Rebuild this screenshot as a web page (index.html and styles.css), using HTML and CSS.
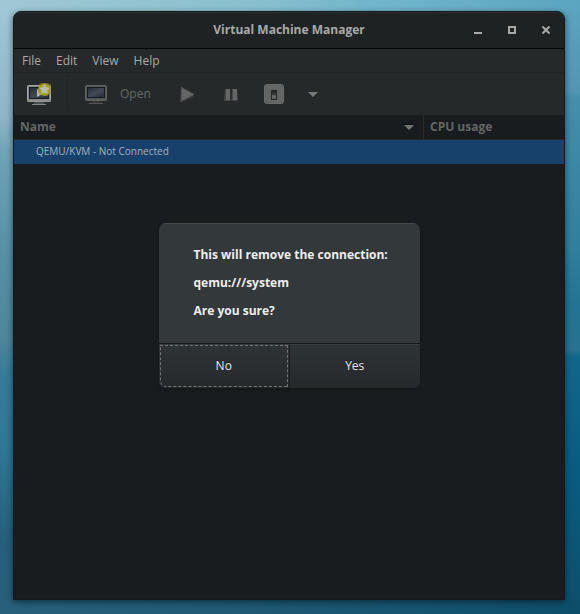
FILE: index.html
```html
<!DOCTYPE html>
<html lang="en">
<head>
<meta charset="utf-8">
<title>Virtual Machine Manager</title>
<link rel="stylesheet" href="styles.css">
</head>
<body>
<main class="window">
  <header class="titlebar">
    <h1 class="title">Virtual Machine Manager</h1>
    <div class="window-controls">
      <button type="button" aria-label="Minimize"><svg width="8" height="8" viewBox="0 0 8 8"><path d="M0 6h8v2H0z" fill="currentColor"/></svg></button>
      <button type="button" aria-label="Maximize"><svg width="8" height="8" viewBox="0 0 8 8"><path d="M1 1h6v6H1z" fill="none" stroke="currentColor" stroke-width="2"/></svg></button>
      <button type="button" aria-label="Close"><svg width="8" height="8" viewBox="0 0 8 8"><path d="M.5.5l7 7M7.500.5l-7 7" fill="none" stroke="currentColor" stroke-width="2"/></svg></button>
    </div>
  </header>
  <nav class="menubar">
    <button type="button">File</button>
    <button type="button">Edit</button>
    <button type="button">View</button>
    <button type="button">Help</button>
  </nav>
  <div class="toolbar">
    <button type="button" class="tool tool-new" aria-label="Create a new virtual machine">
      <svg width="26" height="24" viewBox="0 0 26 24">
        <defs>
          <linearGradient id="screen" x1="0" y1="0" x2="1" y2="1"><stop offset="0" stop-color="#222c38"/><stop offset=".5" stop-color="#414a56"/><stop offset="1" stop-color="#252e39"/></linearGradient>
          <radialGradient id="glow"><stop offset=".6" stop-color="#aaa526"/><stop offset=".9" stop-color="#999619"/><stop offset="1" stop-color="#999619" stop-opacity=".4"/></radialGradient>
        </defs>
        <rect x="1.500" y="3.500" width="23" height="16" rx="1" fill="#878987" stroke="#a5a6a4"/>
        <rect x="3.500" y="5.500" width="19" height="11" fill="url(#screen)" stroke="#161c23"/>
        <path d="M1 18.500h24" stroke="#8b8c8a" stroke-width="2"/>
        <path d="M9 20h8l2 2H7z" fill="#4b4d4c"/><path d="M6 22.500h14" stroke="#858684"/>
        <path d="M11 7v8l7-4z" fill="#b5b7b3"/>
        <path d="M14 1h9l2 1v9l-3 3h-6l-4-3V4z" fill="url(#glow)"/>
        <path d="M18.500 2l1.600 3.300 3.700.5-2.700 2.600.7 3.700-3.300-1.700-3.300 1.700.7-3.700-2.700-2.600 3.700-.5z" fill="#b9bab0"/>
      </svg>
    </button>
    <span class="divider"></span>
    <button type="button" class="tool tool-open" disabled>
      <svg width="24" height="24" viewBox="0 0 24 24">
        <rect x="1.500" y="3.500" width="21" height="15" rx="1" fill="#555756" stroke="#626463"/>
        <rect x="3.500" y="5.500" width="17" height="10" fill="url(#screen)" stroke="#171b20"/>
        <path d="M9 19h6l2 2H7z" fill="#353837"/><path d="M5 21.500h14" stroke="#555756"/>
      </svg>
      <span>Open</span>
    </button>
    <button type="button" class="tool tool-run" aria-label="Run" disabled>
      <svg width="18" height="20" viewBox="0 0 18 20"><path d="M2 3L1 18h2l12-6z" fill="#434645"/><path d="M2.500 3.500v13l12.500-6z" fill="#646766" stroke="#555857"/></svg>
    </button>
    <button type="button" class="tool tool-pause" aria-label="Pause" disabled>
      <svg width="16" height="16" viewBox="0 0 16 16"><path d="M2 3h5l.5 12H1zM9 3h5l1 12H8.500z" fill="#434645"/><path d="M3 3h4v11H3zM10 3h4v11h-4z" fill="#656766"/></svg>
    </button>
    <button type="button" class="tool tool-power" aria-label="Shut down" disabled>
      <svg width="20" height="20" viewBox="0 0 20 20">
        <defs><linearGradient id="rocker" x1="0" y1="0" x2="0" y2="1"><stop offset="0" stop-color="#202322"/><stop offset=".5" stop-color="#3e4040"/><stop offset=".6" stop-color="#707271"/><stop offset="1" stop-color="#555756"/></linearGradient></defs>
        <rect x=".5" y=".5" width="19" height="19" rx="2" fill="#5d5f5e" stroke="#6a6c6b"/>
        <rect x="2.500" y="2.500" width="15" height="15" rx="2" fill="#626463" stroke="#6a6c6b"/>
        <rect x="7.500" y="6.500" width="5" height="9" fill="url(#rocker)" stroke="#242726"/>
      </svg>
    </button>
    <button type="button" class="tool tool-more" aria-label="Shut down options" disabled>
      <svg width="10" height="5" viewBox="0 0 10 5"><path d="M0 0h10L5 5z" fill="#797b79"/></svg>
    </button>
  </div>
  <table class="machines">
    <thead>
      <tr>
        <th scope="col"><span class="sortable">Name <svg width="10" height="6" viewBox="0 0 10 6"><path d="M0 0h10v1H0z" fill="#0a0b0c"/><path d="M0 1h10L5 6z" fill="#747672"/></svg></span></th>
        <th scope="col" class="usage">CPU usage</th>
      </tr>
    </thead>
    <tbody>
      <tr><td colspan="2">QEMU/KVM - Not Connected</td></tr>
    </tbody>
  </table>
  <dialog open class="confirm" aria-labelledby="question">
    <div class="message" id="question">
      <p>This will remove the connection:</p>
      <p>qemu:///system</p>
      <p>Are you sure?</p>
    </div>
    <div class="actions">
      <button type="button" class="focused">No</button>
      <button type="button">Yes</button>
    </div>
  </dialog>
</main>
</body>
</html>
```
FILE: styles.css
```css
* {
  box-sizing: border-box;
}

body {
  margin: 0;
  min-height: 100vh;
  display: flex;
  padding: 11px 15px 14px 13px;
  font: 12px/16px "Open Sans", "Noto Sans", sans-serif;
  color: #a9aaa7;
  background:
    linear-gradient(90deg, #a0c8d4, #88bfce 45%, #70b5cb 65%, #5ba5c0) top / 100% 11px no-repeat,
    linear-gradient(90deg, #28607a, #205a74 40%, #0d4f6b) bottom / 100% 14px no-repeat,
    linear-gradient(#a0c8d4, #8fb5c6 19%, #6fa3b6 25%, #5590a5 42%, #4d8799 55%, #377a98 61%, #2f7796 73%, #255f7b 88%, #28607a) left / 50% 100% no-repeat,
    linear-gradient(#5ba5c0, #5295b3 15%, #438fac 16%, #317f9e 40%, #237394 50%, #277390 57%, #11678b 58%, #085d83 75%, #0d4f6b) right / 50% 100% no-repeat;
}

button {
  margin: 0;
  padding: 0;
  border: 0;
  background: none;
  color: inherit;
  font: inherit;
}

svg {
  display: block;
}

.window {
  position: relative;
  flex: 1;
  display: flex;
  flex-direction: column;
  border: 1px solid #15191a;
  border-radius: 8px 8px 0 0;
  background: #181c1e;
  box-shadow: 0 2px 6px rgba(0, 20, 30, 0.6);
}

.titlebar {
  display: grid;
  grid-template-columns: 1fr auto 1fr;
  align-items: center;
  height: 37px;
  padding: 0 14px 2px;
  border-top: 1px solid #2b3030;
  border-bottom: 1px solid #050606;
  border-radius: 7px 7px 0 0;
  background: #1e2223;
}

.title {
  grid-column: 2;
  margin: 0;
  font-size: 12px;
}

.window-controls {
  display: flex;
  justify-content: flex-end;
  gap: 26px;
}

.menubar {
  display: flex;
  gap: 15px;
  height: 24px;
  padding: 0 8px;
  border-bottom: 1px solid #1f2324;
  background: #252929;
}

.toolbar {
  display: flex;
  align-items: center;
  height: 42px;
  padding: 0 12px;
  background: #252929;
}

.divider {
  height: 34px;
  margin: 0 16px 0 15px;
  border-left: 1px solid #202424;
}

.tool-open {
  display: flex;
  align-items: center;
  gap: 12px;
  color: #656866;
}

.tool-run {
  margin-left: 28px;
}

.tool-pause {
  margin-left: 26px;
}

.tool-power {
  margin-left: 25px;
}

.tool-more {
  margin-left: 24px;
}

.machines {
  width: 100%;
  border-collapse: separate;
  border-spacing: 0;
}

.machines th {
  height: 25px;
  padding: 0 6px;
  border-bottom: 1px solid #242829;
  color: #636664;
  text-align: left;
}

.machines .usage {
  width: 141px;
  border-left: 1px solid #292d2e;
}

.sortable {
  display: flex;
  align-items: center;
  justify-content: space-between;
  padding-right: 3px;
}

.machines td {
  height: 24px;
  padding: 0 22px 2px;
  background: #17406b;
  color: #a5b2be;
  font-size: 10px;
}

.confirm {
  position: absolute;
  inset: 0;
  width: 261px;
  height: fit-content;
  margin: auto;
  padding: 0;
  overflow: hidden;
  border: 0;
  border-radius: 7px;
  background: #33383a;
  color: #eeeeec;
  box-shadow: 0 1px 3px #121617;
}

.message {
  display: grid;
  gap: 12px;
  padding: 23px 32px 24px 35px;
  border-top: 1px solid #454a4b;
  font-weight: bold;
  white-space: nowrap;
}

.message p {
  margin: 0;
}

.actions {
  display: grid;
  grid-template-columns: 1fr 1fr;
  border-top: 1px solid #17191a;
}

.actions button {
  height: 44px;
  padding-bottom: 2px;
  border-top: 1px solid #373c3d;
  background: linear-gradient(#2e3335, #25292b);
  text-shadow: 0 -1px #15191a;
}

.actions button + button {
  border-left: 1px solid #1b1f20;
}

.actions .focused {
  outline: 1px dashed #707475;
  outline-offset: -2px;
  border-bottom-left-radius: 7px;
}
```
